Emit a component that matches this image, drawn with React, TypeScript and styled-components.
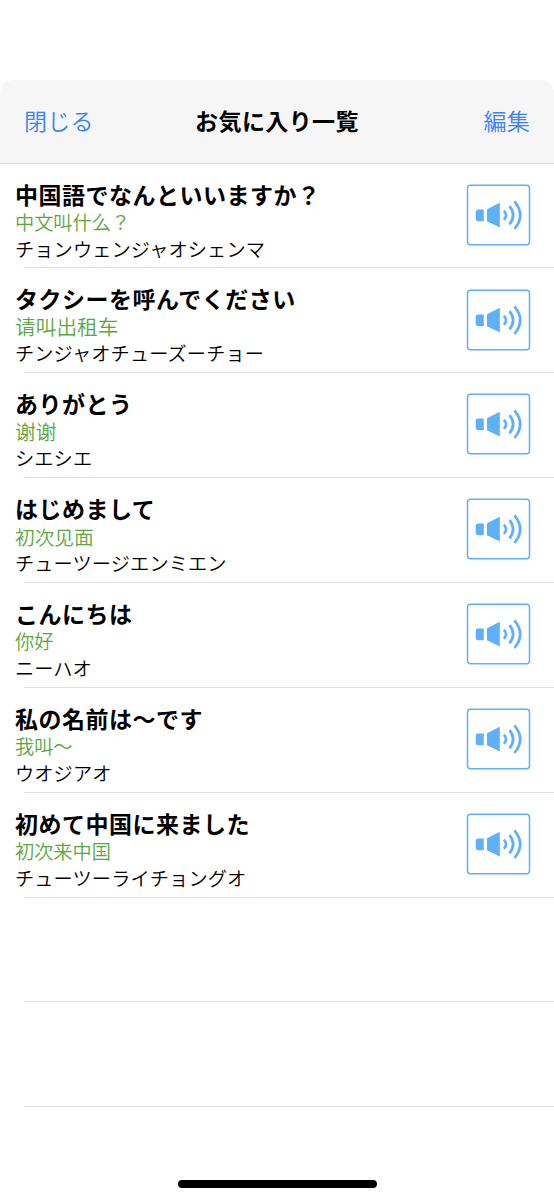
import React from "react";
import styled, { createGlobalStyle } from "styled-components";

const GlobalStyle = createGlobalStyle`
  * { box-sizing: border-box; }
  body {
    margin: 0;
    background: #fff;
    color: #000;
    font-family: "Noto Sans CJK JP", "Noto Sans CJK SC", sans-serif;
  }
`;

const Screen = styled.div`
  display: flex;
  flex-direction: column;
  height: 1200px;
  padding-top: 80px;
  overflow: hidden;
`;

const NavBar = styled.header`
  display: grid;
  grid-template-columns: 1fr auto 1fr;
  align-items: center;
  flex: none;
  height: 84px;
  padding: 0 24px 4px;
  background: #f6f6f6;
  border-bottom: 1px solid #d9d9d9;
  border-radius: 13px 13px 0 0;
`;

const NavButton = styled.button<{ $end?: boolean }>`
  justify-self: ${(p) => (p.$end ? "end" : "start")};
  padding: 0;
  border: 0;
  background: none;
  color: #3a82f7;
  font: 350 23px/34px "Noto Sans CJK JP", sans-serif;
  letter-spacing: 0.3px;
`;

const NavTitle = styled.h1`
  margin: 0;
  font-size: 23px;
  font-weight: 700;
  line-height: 34px;
  letter-spacing: 0.4px;
`;

const List = styled.ul`
  flex: 1;
  margin: 0;
  padding: 0;
  list-style: none;
`;

const Row = styled.li`
  display: flex;
  justify-content: space-between;
  height: 104.88px;
  padding: 15.6px 23px 0 15px;
  background: linear-gradient(#dedede, #dedede) 24px calc(100% - 0.6px) / 100% 1px no-repeat;
`;

const Phrase = styled.div`
  display: flex;
  flex-direction: column;
  white-space: nowrap;
`;

const Japanese = styled.span`
  font-size: 23px;
  font-weight: 700;
  line-height: 29px;
  letter-spacing: 0.5px;
`;

const Chinese = styled.span<{ $pitch: number }>`
  color: #59a83f;
  font-family: "Noto Sans CJK JP", "Noto Sans CJK SC", sans-serif;
  font-size: ${(p) => p.$pitch}px;
  font-weight: 350;
  line-height: 27px;
`;

const Reading = styled.span`
  font-size: 19.2px;
  font-weight: 350;
  line-height: 26px;
  letter-spacing: 0.12px;
`;

const SpeakButton = styled.button`
  width: 65px;
  height: 63px;
  margin-top: 4.1px;
  padding: 0;
  border: 0;
  background: none;

  svg { display: block; }
`;

const BottomBar = styled.footer`
  display: flex;
  justify-content: center;
  flex: none;
  height: 20px;
`;

const HomeIndicator = styled.div`
  width: 199px;
  height: 8px;
  border-radius: 4px;
  background: #000;
`;

const SpeakerIcon = () => (
  <svg width="65" height="63" viewBox="0 0 65 63" fill="none" stroke="#5eb0fb">
    <rect x="1.5" y="1.3" width="62" height="59.5" rx="3" strokeWidth="1.5" />
    <path d="M12 25.6H17.8V37.2H12Q9.7 37.2 9.7 34.8V28Q9.7 25.6 12 25.6Z" fill="#5eb0fb" stroke="none" />
    <path d="M21 25.2L33.8 18.7V43.6L21 37.3Z" fill="#5eb0fb" stroke="none" />
    <path d="M37.8 26.8Q42.4 31.3 37.8 35.8M43.5 22.2Q50.7 31.2 43.5 40.4M48.4 17.4Q60 31.2 48.4 45" strokeWidth="2.7" />
  </svg>
);

const phrases = [
  { ja: "中国語でなんといいますか？", zh: "中文叫什么？", pitch: 19.2, kana: "チョンウェンジャオシェンマ" },
  { ja: "タクシーを呼んでください", zh: "请叫出租车", pitch: 20.7, kana: "チンジャオチューズーチョー" },
  { ja: "ありがとう", zh: "谢谢", pitch: 20.7, kana: "シエシエ" },
  { ja: "はじめまして", zh: "初次见面", pitch: 19.7, kana: "チューツージエンミエン" },
  { ja: "こんにちは", zh: "你好", pitch: 19.2, kana: "ニーハオ" },
  { ja: "私の名前は〜です", zh: "我叫〜", pitch: 19.2, kana: "ウオジアオ" },
  { ja: "初めて中国に来ました", zh: "初次来中国", pitch: 19.2, kana: "チューツーライチョングオ" },
];

export default function App() {
  return (
    <>
      <GlobalStyle />
      <Screen>
        <NavBar>
          <NavButton>閉じる</NavButton>
          <NavTitle>お気に入り一覧</NavTitle>
          <NavButton $end>編集</NavButton>
        </NavBar>
        <List>
          {phrases.map((p) => (
            <Row key={p.ja}>
              <Phrase lang="ja">
                <Japanese>{p.ja}</Japanese>
                <Chinese $pitch={p.pitch}>{p.zh}</Chinese>
                <Reading>{p.kana}</Reading>
              </Phrase>
              <SpeakButton aria-label="再生">
                <SpeakerIcon />
              </SpeakButton>
            </Row>
          ))}
          <Row />
          <Row />
        </List>
        <BottomBar>
          <HomeIndicator />
        </BottomBar>
      </Screen>
    </>
  );
}
